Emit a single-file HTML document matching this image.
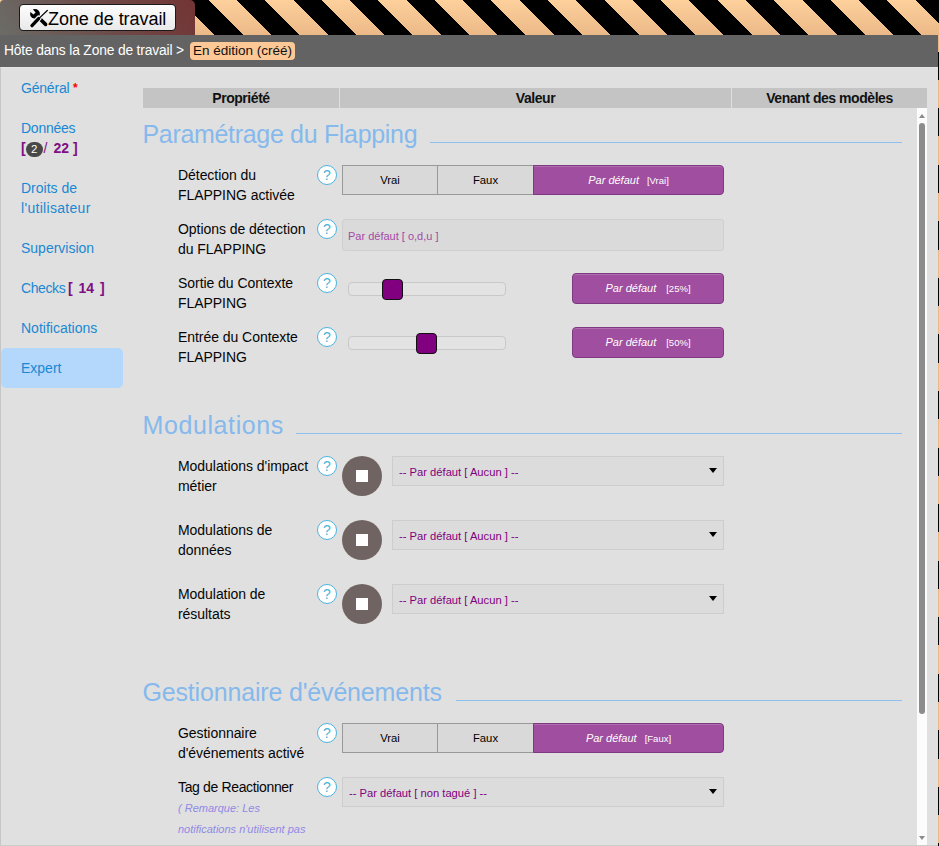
<!DOCTYPE html>
<html><head><meta charset="utf-8">
<style>
*{box-sizing:border-box;}
html,body{margin:0;padding:0;}
body{width:939px;height:846px;overflow:hidden;position:relative;font-family:"Liberation Sans",sans-serif;
background:repeating-linear-gradient(45deg,transparent 0 5.4px,#000 5.4px 25.4px,transparent 25.4px 40px),linear-gradient(#fdd09c 0,#ebb987 35px,#ebb987 100%);}
.abs{position:absolute;}
.tab{left:0;top:0;width:195px;height:35px;border-radius:4px 5px 0 0;background:linear-gradient(60deg,#6b6c67 0%,#6d4a48 55%,#733434 100%);}
.zbtn{left:19px;top:4px;width:157px;height:27px;border:1px solid #1a1a1a;border-radius:4px;background:linear-gradient(#fdfdfd,#e9e9e9);}
.ztxt{left:48px;top:8px;font-size:18px;line-height:22px;color:#000;white-space:nowrap;letter-spacing:-0.05px;}
.hdr{left:0;top:35px;width:938px;height:32px;background:#636363;}
.crumb{left:4px;top:43px;font-size:13.8px;letter-spacing:-0.15px;line-height:16px;color:#fff;white-space:nowrap;}
.badge{left:190px;top:42px;width:105px;height:18px;background:#fcc896;border-radius:4px;font-size:13.5px;line-height:18px;color:#111;padding-left:3px;white-space:nowrap;}
.content{left:0;top:67px;width:938px;height:779px;background:#e0e0e0;border-left:1px solid #c6c6c6;border-top:1px solid #e5e5e5;}
.nav{font-size:14px;color:#1a88d3;white-space:nowrap;line-height:20px;}
.pur{color:#7f0f83;font-weight:bold;}
.th{top:88px;height:20px;background:#c4c4c4;font-size:14px;font-weight:bold;text-align:center;line-height:21px;letter-spacing:-0.45px;color:#111;}
.title{font-size:25px;color:#86b9ec;white-space:nowrap;line-height:30px;}
.tline{height:1px;background:#8ec0ef;}
.lbl{font-size:14px;color:#050505;line-height:19.5px;white-space:nowrap;letter-spacing:-0.05px;}
.help{width:20px;height:20px;border-radius:50%;border:1.3px solid #4ab3dc;background:#fff;color:#4ab3dc;font-size:14px;line-height:18.5px;text-align:center;}
.bg{height:30px;border:1px solid #999;background:#d9d9d9;font-size:11.3px;color:#000;text-align:center;line-height:28px;}
.pd{height:30px;background:#a04e9f;border-radius:0 4px 4px 0;color:#fff;text-align:center;line-height:25px;border:1px solid #7d3a80;box-shadow:inset 0 1px 0 rgba(255,255,255,0.18);}
.pd i{font-size:11px;}
.pd span{font-size:9.5px;margin-left:8px;}
.pdb{height:31px;background:#a04e9f;border-radius:4px;color:#fff;text-align:center;line-height:25px;border:1px solid #7d3a80;box-shadow:inset 0 1px 0 rgba(255,255,255,0.18);}
.pdb i{font-size:11px;}
.pdb span{font-size:9.5px;margin-left:10px;}
.inp{height:32px;border:1px solid #cfcfcf;border-radius:3px;background:#dadada;color:#a44aa5;font-size:11px;line-height:32px;padding-left:5px;}
.track{height:14px;border:1px solid #c8c8c8;border-radius:4px;background:#e3e3e3;}
.handle{width:21px;height:21px;border:1px solid #111;border-radius:4px;background:#800080;}
.circ{width:40px;height:40px;border-radius:50%;background:#706462;}
.circ:after{content:"";position:absolute;left:14px;top:14px;width:12px;height:12px;background:#fff;}
.sel{height:30px;border:1px solid #cdcdcd;background:#dcdcdc;color:#800080;font-size:11.2px;line-height:30px;padding-left:6px;white-space:nowrap;}
.sel:after{content:"";position:absolute;right:6px;top:11px;border-left:4px solid transparent;border-right:4px solid transparent;border-top:5px solid #000;}
.rem{font-size:11px;font-style:italic;color:#9189e6;line-height:20.5px;white-space:nowrap;}
</style></head>
<body>
<div class="abs tab"></div>
<div class="abs zbtn"></div>
<svg class="abs" style="left:28px;top:7px" width="22" height="22" viewBox="28 7 22 22">
  <circle cx="35" cy="13.9" r="4.9" fill="#000"/>
  <path d="M29.6 11.2 L33.4 14.6 L35.6 12.6 L32.2 8.6 Z" fill="#f4f4f4"/>
  <line x1="37.5" y1="16.5" x2="45.6" y2="24.4" stroke="#000" stroke-width="3.6" stroke-linecap="round"/>
  <line x1="47.3" y1="10.5" x2="39.8" y2="17.6" stroke="#f4f4f4" stroke-width="2.6" stroke-linecap="round"/>
  <line x1="38.8" y1="18.2" x2="32" y2="25.6" stroke="#f4f4f4" stroke-width="5.4" stroke-linecap="round"/>
  <line x1="47.3" y1="10.5" x2="39.8" y2="17.6" stroke="#000" stroke-width="1.2" stroke-linecap="round"/>
  <line x1="38.6" y1="18.6" x2="32" y2="25.6" stroke="#000" stroke-width="3.4" stroke-linecap="round"/>
</svg>
<div class="abs ztxt">Zone de travail</div>

<div class="abs hdr"></div>
<div class="abs crumb">Hôte dans la Zone de travail &gt;</div>
<div class="abs badge">En édition (créé)</div>

<div class="abs content"></div>

<!-- nav -->
<div class="abs nav" style="left:21px;top:78px;letter-spacing:-0.2px">Général</div>
<div class="abs nav" style="left:73px;top:78px;color:#f00;font-size:12px;font-weight:bold">*</div>
<div class="abs nav" style="left:21px;top:118px;letter-spacing:-0.25px">Données</div>
<div class="abs nav pur" style="left:21px;top:138px">[</div>
<div class="abs" style="left:25.5px;top:142px;width:17.5px;height:15px;border-radius:7.5px;background:#484848;color:#fff;font-size:11.5px;line-height:15px;text-align:center;font-family:'Liberation Sans',sans-serif">2</div>
<div class="abs nav" style="left:43.5px;top:138px;color:#7f0f83">/</div>
<div class="abs nav pur" style="left:53.5px;top:138px">22</div>
<div class="abs nav pur" style="left:73px;top:138px">]</div>
<div class="abs nav" style="left:21px;top:178px">Droits de<br><span style="letter-spacing:0.3px">l'utilisateur</span></div>
<div class="abs nav" style="left:21px;top:238px">Supervision</div>
<div class="abs nav" style="left:21px;top:278px;letter-spacing:-0.4px">Checks</div>
<div class="abs nav pur" style="left:68px;top:278px">[</div>
<div class="abs nav pur" style="left:78.5px;top:278px">14</div>
<div class="abs nav pur" style="left:100px;top:278px">]</div>
<div class="abs nav" style="left:21px;top:318px">Notifications</div>
<div class="abs" style="left:1px;top:348px;width:122px;height:40px;border-radius:5px;background:#b3d8fc"></div>
<div class="abs nav" style="left:21px;top:358px">Expert</div>

<!-- table header -->
<div class="abs th" style="left:143px;width:196px">Propriété</div>
<div class="abs th" style="left:340px;width:391px">Valeur</div>
<div class="abs th" style="left:732px;width:195px">Venant des modèles</div>

<!-- scrollbar -->
<div class="abs" style="left:917px;top:108px;width:10px;height:738px;background:#fcfcfc"></div>
<div class="abs" style="left:919px;top:114px;border-left:3px solid transparent;border-right:3px solid transparent;border-bottom:4px solid #8a8a8a"></div>
<div class="abs" style="left:919px;top:123px;width:6px;height:591px;border-radius:3px;background:#8c8c8c"></div>
<div class="abs" style="left:919px;top:836px;border-left:3px solid transparent;border-right:3px solid transparent;border-top:4px solid #8a8a8a"></div>

<!-- Section 1 -->
<div class="abs title" style="left:142.5px;top:119px;letter-spacing:-0.32px">Paramétrage du Flapping</div>
<div class="abs tline" style="left:430px;top:142px;width:472px"></div>

<div class="abs lbl" style="left:178px;top:166px">Détection du<br>FLAPPING activée</div>
<div class="abs help" style="left:317px;top:165px">?</div>
<div class="abs bg" style="left:342px;top:165px;width:96px">Vrai</div>
<div class="abs bg" style="left:437px;top:165px;width:97px">Faux</div>
<div class="abs pd" style="left:533px;top:165px;width:191px"><i>Par défaut</i><span>[Vrai]</span></div>

<div class="abs lbl" style="left:178px;top:220px">Options de détection<br>du FLAPPING</div>
<div class="abs help" style="left:317px;top:219px">?</div>
<div class="abs inp" style="left:342px;top:219px;width:382px">Par défaut [ o,d,u ]</div>

<div class="abs lbl" style="left:178px;top:274px">Sortie du Contexte<br>FLAPPING</div>
<div class="abs help" style="left:317px;top:273px">?</div>
<div class="abs track" style="left:348px;top:282px;width:158px"></div>
<div class="abs handle" style="left:382px;top:279px"></div>
<div class="abs pdb" style="left:572px;top:273px;width:152px"><i>Par défaut</i><span>[25%]</span></div>

<div class="abs lbl" style="left:178px;top:328px">Entrée du Contexte<br>FLAPPING</div>
<div class="abs help" style="left:317px;top:327px">?</div>
<div class="abs track" style="left:348px;top:336px;width:158px"></div>
<div class="abs handle" style="left:416px;top:333px"></div>
<div class="abs pdb" style="left:572px;top:327px;width:152px"><i>Par défaut</i><span>[50%]</span></div>

<!-- Section 2 -->
<div class="abs title" style="left:142.5px;top:410px;letter-spacing:0.6px">Modulations</div>
<div class="abs tline" style="left:296px;top:433px;width:606px"></div>

<div class="abs lbl" style="left:178px;top:457px">Modulations d'impact<br>métier</div>
<div class="abs help" style="left:317px;top:456px">?</div>
<div class="abs circ" style="left:342px;top:456px"></div>
<div class="abs sel" style="left:392px;top:456px;width:332px">-- Par défaut [ Aucun ] --</div>

<div class="abs lbl" style="left:178px;top:521px">Modulations de<br>données</div>
<div class="abs help" style="left:317px;top:520px">?</div>
<div class="abs circ" style="left:342px;top:520px"></div>
<div class="abs sel" style="left:392px;top:520px;width:332px">-- Par défaut [ Aucun ] --</div>

<div class="abs lbl" style="left:178px;top:585px">Modulation de<br>résultats</div>
<div class="abs help" style="left:317px;top:584px">?</div>
<div class="abs circ" style="left:342px;top:584px"></div>
<div class="abs sel" style="left:392px;top:584px;width:332px">-- Par défaut [ Aucun ] --</div>

<!-- Section 3 -->
<div class="abs title" style="left:142.5px;top:677px;letter-spacing:-0.17px">Gestionnaire d'événements</div>
<div class="abs tline" style="left:456px;top:700px;width:446px"></div>

<div class="abs lbl" style="left:178px;top:724px">Gestionnaire<br>d'événements activé</div>
<div class="abs help" style="left:317px;top:723px">?</div>
<div class="abs bg" style="left:342px;top:723px;width:96px">Vrai</div>
<div class="abs bg" style="left:437px;top:723px;width:97px">Faux</div>
<div class="abs pd" style="left:533px;top:723px;width:191px"><i>Par défaut</i><span>[Faux]</span></div>

<div class="abs lbl" style="left:178px;top:778px;letter-spacing:-0.35px">Tag de Reactionner</div>
<div class="abs rem" style="left:178px;top:798px">( Remarque: Les<br>notifications n'utilisent pas</div>
<div class="abs help" style="left:317px;top:777px">?</div>
<div class="abs sel" style="left:342px;top:777px;width:382px">-- Par défaut [ non tagué ] --</div>

<div class="abs" style="left:0;top:845px;width:938px;height:1px;background:#cdcdcd"></div>
</body></html>
